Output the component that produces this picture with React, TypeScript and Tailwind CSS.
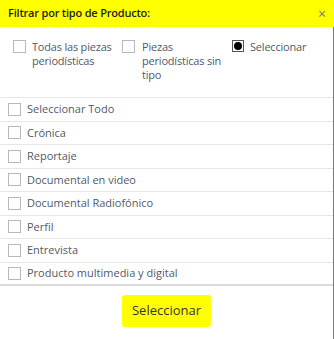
import React from "react";

const items = [
  "Seleccionar Todo",
  "Crónica",
  "Reportaje",
  "Documental en video",
  "Documental Radiofónico",
  "Perfil",
  "Entrevista",
  "Producto multimedia y digital",
];

function Box() {
  return <span className="block w-[13px] h-[13px] shrink-0 border border-[#b8b8b8] bg-white" />;
}

export default function App() {
  return (
    <div className="w-[334px] h-[339px] bg-white flex flex-col text-[11px] text-[#515a66]" style={{ fontFamily: '"Open Sans", "Noto Sans", sans-serif' }}>
      <div className="h-[27px] bg-[#ffff00] flex items-center justify-between pl-[8px] pr-[8px] shrink-0">
        <span className="font-semibold text-[11px] tracking-[-0.2px] text-[#222]">Filtrar por tipo de Producto:</span>
        <span className="text-[#777] text-[14px] leading-none">×</span>
      </div>
      <div className="flex-1 flex flex-col border-r border-[#7a7a7a]">
        <div className="flex pl-[13px] pt-[13px] h-[70px] leading-[14px] tracking-[-0.2px]">
          <div className="flex gap-[6px] w-[109px] shrink-0">
            <Box />
            <span className="flex flex-col whitespace-nowrap">
              <span>Todas las piezas</span>
              <span>periodísticas</span>
            </span>
          </div>
          <div className="flex gap-[7px] w-[110px] shrink-0">
            <Box />
            <span className="flex flex-col whitespace-nowrap">
              <span>Piezas</span>
              <span>periodísticas sin</span>
              <span>tipo</span>
            </span>
          </div>
          <div className="flex gap-[6px]">
            <span className="w-[12px] h-[12px] border border-[#555] bg-white flex items-center justify-center shrink-0">
              <span className="w-[8px] h-[8px] rounded-full bg-black" />
            </span>
            <span>Seleccionar</span>
          </div>
        </div>
        <div className="flex flex-col border-t border-[#e6e6e6]">
          {items.map((t, i) => (
            <div
              key={t}
              className={`h-[23.5px] flex items-center gap-[6px] pl-[8px] ${i === items.length - 1 ? "border-b-2 border-[#dcdcdc]" : "border-b border-[#e6e6e6]"}`}
            >
              <Box />
              <span>{t}</span>
            </div>
          ))}
        </div>
        <div className="flex-1 flex items-start justify-center pt-[9px]">
          <button className="h-[32px] px-[10px] bg-[#ffff00] rounded-[3px] text-[13px] text-[#333]">Seleccionar</button>
        </div>
      </div>
    </div>
  );
}
